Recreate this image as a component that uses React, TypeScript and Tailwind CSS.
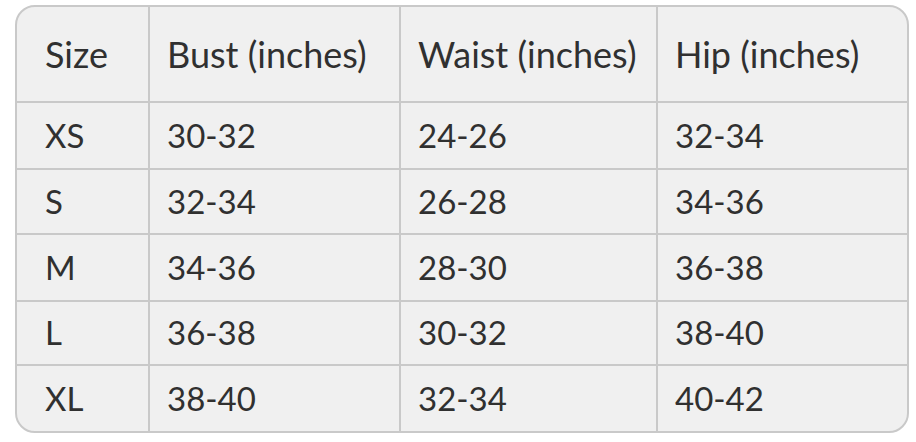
const HEADERS = ["Size", "Bust (inches)", "Waist (inches)", "Hip (inches)"];

const ROWS = [
  ["XS", "30-32", "24-26", "32-34"],
  ["S", "32-34", "26-28", "34-36"],
  ["M", "34-36", "28-30", "36-38"],
  ["L", "36-38", "30-32", "38-40"],
  ["XL", "38-40", "32-34", "40-42"],
];

export default function App() {
  return (
    <div className="w-[916px] h-[442px] bg-white pl-[15px] pt-[5px]">
      <div
        className="w-[894px] h-[428px] bg-[#f0f0f0] border-2 border-[#c9c9c9] rounded-[20px] overflow-hidden text-[#303030]"
        style={{ fontFamily: "Lato, 'Noto Sans', sans-serif" }}
      >
        <div className="grid grid-cols-[133px_251px_257px_1fr] grid-rows-[96px_67px_65px_67px_64px_1fr] h-full">
          {HEADERS.map((h, i) => (
            <div
              key={h}
              className={`flex items-center text-[36px] border-b-2 border-[#c9c9c9] ${
                i < 3 ? "border-r-2" : ""
              } ${i > 0 ? "pl-[17px]" : "pl-[28px]"}`}
            >
              {h}
            </div>
          ))}
          {ROWS.map((row, r) =>
            row.map((cell, i) => (
              <div
                key={`${r}-${i}`}
                className={`flex items-center text-[33px] border-[#c9c9c9] ${
                  i < 3 ? "border-r-2" : ""
                } ${r < ROWS.length - 1 ? "border-b-2" : ""} ${
                  i > 0 ? "pl-[17px]" : "pl-[28px]"
                }`}
              >
                {cell}
              </div>
            ))
          )}
        </div>
      </div>
    </div>
  );
}
